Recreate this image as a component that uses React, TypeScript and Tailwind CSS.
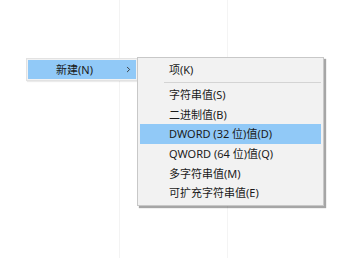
import { ChevronRight } from "lucide-react";

const items = [
  { label: "字符串值(S)" },
  { label: "二进制值(B)" },
  { label: "DWORD (32 位)值(D)", active: true },
  { label: "QWORD (64 位)值(Q)" },
  { label: "多字符串值(M)" },
  { label: "可扩充字符串值(E)" },
];

export default function App() {
  return (
    <div
      className="relative w-[352px] h-[258px] overflow-hidden bg-white text-[11px] text-[#1a1a1a]"
      style={{ fontFamily: '"Noto Sans", "Noto Sans CJK SC", sans-serif' }}
    >
      {/* faint background columns */}
      <div className="absolute left-[119px] top-0 h-full w-px bg-[#f3f3f3]" />
      <div className="absolute left-[227px] top-0 h-full w-px bg-[#f4f4f4]" />

      <div className="relative flex items-start pl-[26px] pt-[57px]">
        {/* parent menu */}
        <div className="mt-px w-[112px] h-[23px] border border-[#e2e2e2] bg-[#f2f2f2] p-px shadow-[1px_1px_1px_rgba(0,0,0,0.08)]">
          <div className="flex h-full items-center bg-[#91c9f7] pl-[28px] pr-[3px]">
            <span className="flex-1 leading-none">新建(N)</span>
            <ChevronRight className="w-[9px] h-[9px] text-[#333]" strokeWidth={2.5} />
          </div>
        </div>

        {/* sub menu */}
        <div className="-ml-px w-[187px] border border-[#c8c8c8] bg-[#f2f2f2] p-[2px] shadow-[2px_2px_1px_rgba(0,0,0,0.35)]">
          <div className="flex h-[19px] items-center pl-[29px] leading-none">项(K)</div>
          <div className="flex h-[6px] items-center pl-[24px]">
            <div className="h-px w-full bg-[#d4d4d4]" />
          </div>
          {items.map((it) => (
            <div
              key={it.label}
              className={
                it.active
                  ? "flex h-[19.6px] items-center bg-[#91c9f7] pl-[29px] leading-none"
                  : "flex h-[19.6px] items-center pl-[29px] leading-none"
              }
            >
              {it.label}
            </div>
          ))}
        </div>
      </div>
    </div>
  );
}
